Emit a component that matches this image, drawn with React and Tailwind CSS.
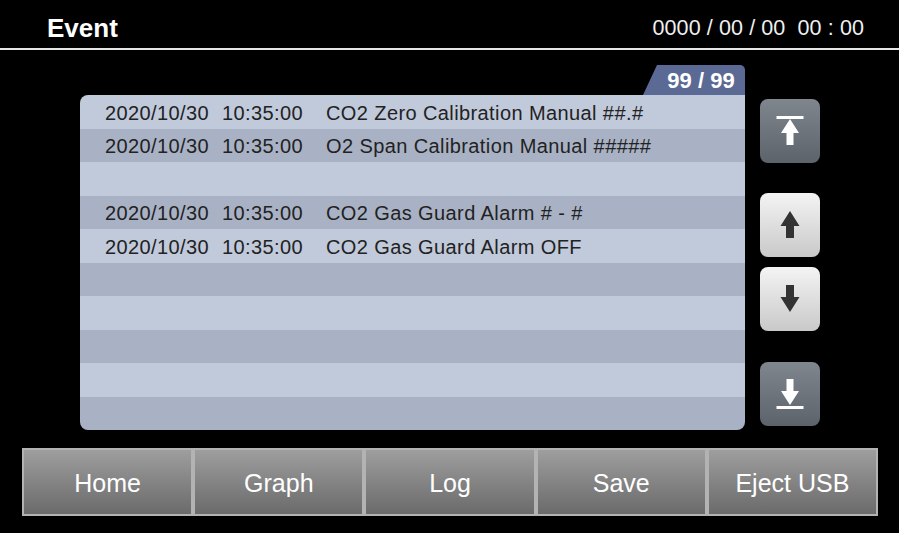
import React from "react";

const rows = [
    { date: "2020/10/30", time: "10:35:00", text: "CO2 Zero Calibration Manual ##.#" },
    { date: "2020/10/30", time: "10:35:00", text: "O2 Span Calibration Manual #####" },
    null,
    { date: "2020/10/30", time: "10:35:00", text: "CO2 Gas Guard Alarm # - #" },
    { date: "2020/10/30", time: "10:35:00", text: "CO2 Gas Guard Alarm OFF" },
    null,
    null,
    null,
    null,
    null,
];

const navItems = ["Home", "Graph", "Log", "Save", "Eject USB"];

function TopIcon() {
    return (
        <svg width="28" height="30" viewBox="0 0 28 30">
            <rect x="0.5" y="0" width="27" height="3" fill="#fff" />
            <polygon
                points="14,3 23,17 17.5,17 17.5,29 10.5,29 10.5,17 5,17"
                fill="#fff"
            />
        </svg>
    );
}

function BottomIcon() {
    return (
        <svg width="28" height="30" viewBox="0 0 28 30">
            <polygon
                points="10.5,0 17.5,0 17.5,12 23,12 14,26 5,12 10.5,12"
                fill="#fff"
            />
            <rect x="0.5" y="27" width="27" height="3" fill="#fff" />
        </svg>
    );
}

function UpIcon() {
    return (
        <svg width="20" height="28" viewBox="0 0 20 28">
            <polygon points="10,0 19.5,15 14,15 14,27 6,27 6,15 0.5,15" fill="#333" />
        </svg>
    );
}

function DownIcon() {
    return (
        <svg width="20" height="28" viewBox="0 0 20 28">
            <polygon points="6,0 14,0 14,12 19.5,12 10,27 0.5,12 6,12" fill="#333" />
        </svg>
    );
}

function DarkButton({ children }) {
    return (
        <button
            type="button"
            className="flex h-[64px] w-[60px] items-center justify-center rounded-[8px] bg-gradient-to-b from-[#80868d] to-[#5c636a]"
        >
            {children}
        </button>
    );
}

function LightButton({ children }) {
    return (
        <button
            type="button"
            className="flex h-[64px] w-[60px] items-center justify-center rounded-[8px] bg-gradient-to-b from-[#f4f4f4] to-[#c9c9c9]"
        >
            {children}
        </button>
    );
}

export default function App() {
    return (
        <div className="flex h-[533px] w-[899px] flex-col overflow-hidden bg-black font-['Liberation_Sans',Arial,sans-serif]">
            {/* header */}
            <div className="flex h-[50px] items-center justify-between border-b-2 border-[#e6e6e6] pl-[47px] pr-[35px] pt-[9px]">
                <span className="text-[26px] font-bold text-white">Event</span>
                <span className="text-[21.5px] tracking-[0.1px] text-[#f0f0f0]">
                    0000 / 00 / 00&nbsp;&nbsp;00 : 00
                </span>
            </div>

            <div className="flex gap-[15px] pl-[80px] pt-[15px]">
                <div className="flex w-[665px] flex-col">
                    <div className="flex h-[30px] justify-end">
                        <svg width="14" height="30" viewBox="0 0 14 30" className="block">
                            <polygon points="14,0 14,30 0,30" fill="#5b6a95" />
                        </svg>
                        <div className="flex w-[88px] items-center justify-center rounded-tr-[5px] bg-[#5b6a95] text-[22px] font-bold text-white">
                            99 / 99
                        </div>
                    </div>
                    <div className="flex h-[335px] flex-col overflow-hidden rounded-[8px] rounded-tr-none">
                        {rows.map((row, i) => (
                            <div
                                key={i}
                                className={
                                    "flex h-[33.5px] items-center pt-[2px] text-[20px] tracking-[0.4px] text-[#222] " +
                                    (i % 2 === 0 ? "bg-[#c1cadb]" : "bg-[#a9b2c5]")
                                }
                            >
                                {row && (
                                    <>
                                        <span className="ml-[25px] w-[117px]">{row.date}</span>
                                        <span className="w-[104px]">{row.time}</span>
                                        <span>{row.text}</span>
                                    </>
                                )}
                            </div>
                        ))}
                    </div>
                </div>

                <div className="flex w-[60px] flex-col pt-[34px]">
                    <DarkButton>
                        <TopIcon />
                    </DarkButton>
                    <div className="mt-[30px]">
                        <LightButton>
                            <UpIcon />
                        </LightButton>
                    </div>
                    <div className="mt-[10px]">
                        <LightButton>
                            <DownIcon />
                        </LightButton>
                    </div>
                    <div className="mt-[31px]">
                        <DarkButton>
                            <BottomIcon />
                        </DarkButton>
                    </div>
                </div>
            </div>

            {/* bottom nav */}
            <div className="ml-[22px] mt-[18px] flex h-[68px] w-[856px]">
                {navItems.map((item) => (
                    <button
                        key={item}
                        type="button"
                        className="flex flex-1 items-center justify-center border-2 border-[#b3b3b3] bg-gradient-to-b from-[#9e9e9e] to-[#6b6b6b] pt-[3px] text-[25px] text-white"
                    >
                        {item}
                    </button>
                ))}
            </div>
        </div>
    );
}
